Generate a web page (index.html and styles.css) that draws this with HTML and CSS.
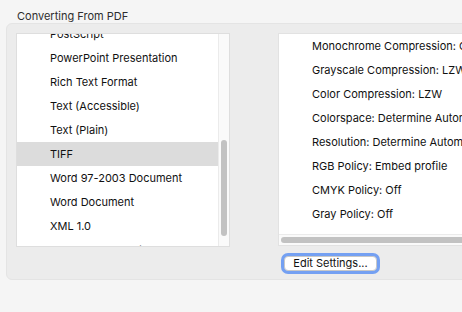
FILE: index.html
```html
<!DOCTYPE html>
<html lang="en">
	<head>
		<meta charset="UTF-8" />
		<title>Converting From PDF</title>
		<link rel="stylesheet" href="styles.css">
	</head>
	<body>
		<div class="title">Converting From PDF</div>
		<div class="group">
			<div class="formats">
				<div class="rows">
					<div class="row">PostScript</div>
					<div class="row">PowerPoint Presentation</div>
					<div class="row">Rich Text Format</div>
					<div class="row">Text (Accessible)</div>
					<div class="row">Text (Plain)</div>
					<div class="row selected">TIFF</div>
					<div class="row">Word 97-2003 Document</div>
					<div class="row">Word Document</div>
					<div class="row">XML 1.0</div>
					<div class="row">XML Spreadsheet 2003</div>
				</div>
				<div class="vscroll"><span class="thumb"></span></div>
			</div>
			<div class="side">
				<div class="settings">
					<div class="rows">
						<div class="row">Monochrome Compression: CCITT Group 4</div>
						<div class="row">Grayscale Compression: LZW</div>
						<div class="row">Color Compression: LZW</div>
						<div class="row">Colorspace: Determine Automatically</div>
						<div class="row">Resolution: Determine Automatically</div>
						<div class="row">RGB Policy: Embed profile</div>
						<div class="row">CMYK Policy: Off</div>
						<div class="row">Gray Policy: Off</div>
					</div>
					<div class="hscroll"><span class="thumb"></span></div>
				</div>
				<button class="edit">Edit Settings...</button>
			</div>
		</div>
	</body>
</html>
```
FILE: styles.css
```css
body {
	margin: 0;
	background: #f5f5f5;
	font-family: Inter, "Liberation Sans", sans-serif;
	font-size: 11px;
	color: #111;
	overflow: hidden;
}
.title {
	height: 23px;
	box-sizing: border-box;
	display: flex;
	align-items: flex-end;
	padding-left: 17px;
	padding-bottom: 1px;
	line-height: 1;
	color: #2e2e2e;
}
.group {
	margin-left: 6px;
	width: 520px;
	height: 257px;
	box-sizing: border-box;
	padding: 10px 10px 0;
	background: #ececec;
	border-radius: 6px;
	border: 1px solid #e4e4e4;
	display: flex;
	gap: 48px;
}
.formats {
	flex-shrink: 0;
	width: 214px;
	height: 214px;
	margin-top: -1px;
	margin-left: -1px;
	background: #fff;
	border: 1px solid #dedede;
	box-sizing: border-box;
	display: flex;
	overflow: hidden;
}
.formats .rows {
	flex: 1;
	margin-top: -12px;
}
.row {
	height: 24px;
	line-height: 24px;
	padding-left: 33px;
	white-space: nowrap;
}
.formats .row {
	line-height: 25px;
}
.selected {
	background: #dcdcdc;
}
.vscroll {
	width: 10px;
	background: #fafafa;
	border-left: 1px solid #ebebeb;
	position: relative;
}
.vscroll .thumb {
	position: absolute;
	left: 2px;
	top: 106px;
	width: 6px;
	height: 96px;
	border-radius: 3px;
	background: #c2c2c2;
}
.side {
	flex-shrink: 0;
	margin-top: -1px;
	display: flex;
	flex-direction: column;
	align-items: flex-start;
}
.settings {
	width: 240px;
	height: 213px;
	background: #fff;
	border: 1px solid #e2e2e2;
	border-right: none;
	box-sizing: border-box;
	display: flex;
	flex-direction: column;
}
.settings .rows {
	flex: 1;
	overflow: hidden;
}
.hscroll {
	height: 10px;
	background: #fafafa;
	border-top: 1px solid #ebebeb;
	position: relative;
}
.hscroll .thumb {
	position: absolute;
	left: 2px;
	right: 0;
	top: 2px;
	height: 6px;
	border-radius: 3px;
	background: #c2c2c2;
}
.edit {
	margin-top: 10px;
	margin-left: 6px;
	width: 93px;
	height: 15px;
	padding: 0;
	font: inherit;
	line-height: 1;
	color: #111;
	background: #fff;
	border: 1px solid #c8c8c8;
	border-radius: 4px;
	box-shadow: 0 0 0 3px #74a0f2;
}
```
